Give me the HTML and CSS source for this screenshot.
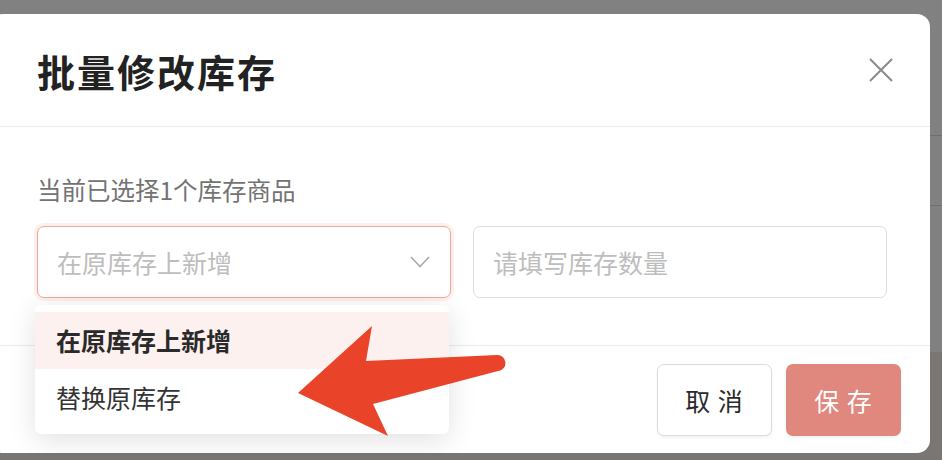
FILE: index.html
```html
<!DOCTYPE html>
<html lang="zh-CN">
<head>
    <meta charset="UTF-8">
    <meta name="viewport" content="width=device-width, initial-scale=1.0">
    <title>批量修改库存</title>
    <link rel="stylesheet" href="styles.css">
</head>
<body>
    <div class="modal">
        <div class="modal-header">
            <h2 class="modal-title">批量修改库存</h2>
            <span class="close">
                <svg width="24" height="24" viewBox="0 0 24 24"><path d="M1 1 L23 23 M23 1 L1 23" stroke="#8a8a8a" stroke-width="2" fill="none"/></svg>
            </span>
        </div>

        <div class="modal-body">
            <p class="hint">当前已选择1个库存商品</p>
            <div class="form-row">
                <div class="select-wrap">
                    <div class="select is-open">
                        <span class="placeholder">在原库存上新增</span>
                        <svg class="chevron" width="20" height="12" viewBox="0 0 20 12"><path d="M1 1 L10 10.5 L19 1" stroke="#ababab" stroke-width="1.6" fill="none"/></svg>
                    </div>
                    <!-- open menu -->
                    <ul class="dropdown">
                        <li class="active">在原库存上新增</li>
                        <li>替换原库存</li>
                    </ul>
                </div>
                <div class="field">
                    <span class="placeholder">请填写库存数量</span>
                </div>
            </div>
        </div>

        <div class="modal-footer">
            <button class="btn btn-cancel">取 消</button>
            <button class="btn btn-save">保 存</button>
        </div>

        <!-- annotation arrow -->
        <svg class="arrow" width="214" height="118" viewBox="0 0 214 118">
            <path d="M2 71 L76 4 L70 39 L201 33 A8 8 0 0 1 202 49 L77 82 L92 114 Z" fill="#e9432a"/>
        </svg>
    </div>
</body>
</html>
```

FILE: styles.css
```css
* {
    box-sizing: border-box;
}
body {
    margin: 0;
    height: 460px;
    overflow: hidden;
    font-family: "Noto Sans CJK SC", "Noto Sans", sans-serif;
    background:
        linear-gradient(#6f6f6f, #6f6f6f) 0 135px / 100% 1px no-repeat,
        linear-gradient(#6f6f6f, #6f6f6f) 0 205px / 100% 1px no-repeat,
        linear-gradient(#818181 352px, #7a7674 352px);
}
.modal {
    position: relative;
    margin: 14px 12px 0 -10px;
    height: 439px;
    background: #fff;
    border-radius: 13px;
    display: flex;
    flex-direction: column;
}
.modal-header {
    height: 113px;
    padding: 0 37px 0 47px;
    border-bottom: 1px solid #ececec;
    display: flex;
    align-items: center;
    justify-content: space-between;
}
.modal-title {
    margin: 0;
    font-size: 38px;
    font-weight: 700;
    color: #222;
    letter-spacing: 2px;
}
.close {
    display: flex;
}
.modal-body {
    height: 219px;
    padding: 47px 43px 0 47px;
    border-bottom: 1px solid #ececec;
}
.hint {
    margin: 0 0 20px;
    font-size: 24.5px;
    line-height: 32px;
    color: #737373;
}
.form-row {
    display: grid;
    grid-template-columns: 1fr 1fr;
    gap: 22px;
}
.select-wrap {
    position: relative;
}
.select,
.field {
    height: 72px;
    border: 1px solid #dcdcdc;
    border-radius: 7px;
    padding: 0 20px 0 19px;
    display: flex;
    align-items: center;
    justify-content: space-between;
}
.select.is-open {
    border-color: #f1a698;
    box-shadow: 0 0 0 3px rgba(241, 166, 152, 0.18);
}
.placeholder {
    font-size: 25px;
    color: #bdbdbd;
}
.dropdown {
    position: absolute;
    left: -2px;
    top: 79px;
    width: 414px;
    margin: 0;
    padding: 7px 0 8px;
    list-style: none;
    background: #fff;
    border-radius: 6px;
    box-shadow: 0 6px 28px rgba(0, 0, 0, 0.12);
    z-index: 2;
}
.dropdown li {
    height: 57px;
    line-height: 57px;
    padding-left: 21px;
    font-size: 25px;
    color: #333;
}
.dropdown li.active {
    background: #fdf1ef;
    font-weight: 700;
    color: #2a2a2a;
}
.modal-footer {
    flex: 1;
    padding: 0 29px 0 0;
    display: flex;
    align-items: center;
    justify-content: flex-end;
    gap: 14px;
}
.btn {
    width: 115px;
    height: 72px;
    border-radius: 7px;
    font-family: inherit;
    font-size: 25px;
    letter-spacing: 1px;
    box-shadow: 0 2px 3px rgba(0, 0, 0, 0.05);
    cursor: pointer;
}
.btn-cancel {
    background: #fff;
    border: 1px solid #dcdcdc;
    color: #2a2a2a;
}
.btn-save {
    background: #e0877e;
    border: none;
    color: #fff;
}
.arrow {
    position: absolute;
    left: 306px;
    top: 308px;
    z-index: 3;
}
```
